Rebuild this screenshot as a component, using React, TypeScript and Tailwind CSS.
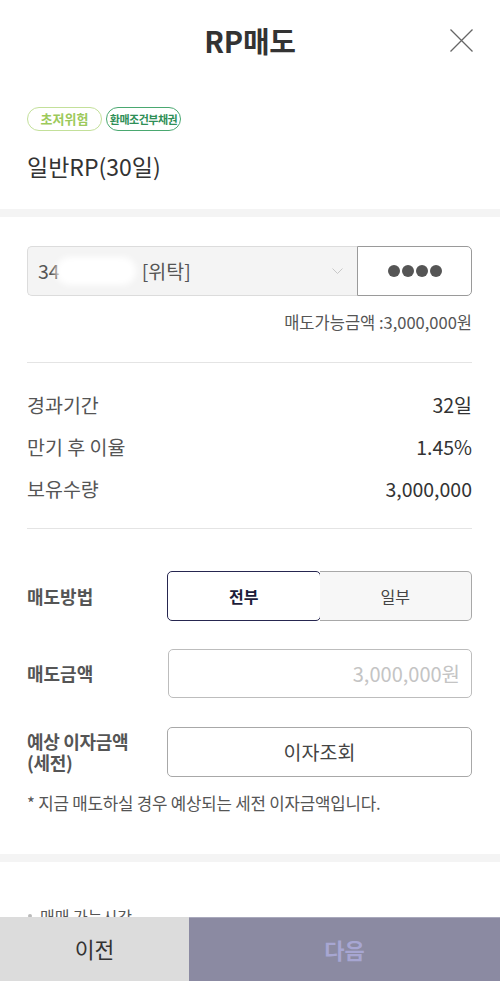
const font = { fontFamily: '"Noto Sans CJK KR", "Noto Sans", sans-serif' }

export default function App() {
  return (
    <div className="min-h-screen bg-white text-[#333] pb-[64px]" style={font}>
      {/* header */}
      <div className="relative h-[82px] flex items-center justify-center">
        <h1 className="text-[29px] font-bold text-[#333] tracking-[-0.3px]">RP매도</h1>
        <button className="absolute right-[27px] top-[29px]">
          <svg width="23" height="23" viewBox="0 0 23 23" fill="none">
            <path d="M0.5 0.5 L22.5 22.5 M22.5 0.5 L0.5 22.5" stroke="#666" strokeWidth="1.3" />
          </svg>
        </button>
      </div>

      <div className="pl-[27px] pr-[28px] pt-[25px] pb-[28px]">
        <div className="flex gap-[4px]">
          <span className="h-[24px] w-[75px] rounded-full border border-[#c3e09a] text-[#9cc95a] text-[13px] font-bold flex items-center justify-center">초저위험</span>
          <span className="h-[24px] w-[75px] rounded-full border-[1.5px] border-[#4aa870] text-[#2f8f57] text-[11px] font-bold flex items-center justify-center tracking-[-0.5px]">환매조건부채권</span>
        </div>
        <div className="mt-[20px] text-[23px] leading-[30px] text-[#333]">일반RP(30일)</div>
      </div>

      <div className="h-[8px] bg-[#f4f4f4]" />

      <div className="pl-[27px] pr-[28px] pt-[29px]">
        <div className="flex h-[50px]">
          <div className="flex-1 flex items-center bg-[#f4f4f4] border border-[#dcdcdc] border-r-0 rounded-l-[5px] pl-[10px] pr-[14px] text-[19.5px] text-[#555]">
            <span>34</span>
            <span className="w-[80px] h-[28px] bg-white rounded-full blur-[3px] -ml-[4px]" />
            <span className="ml-[6px]">[위탁]</span>
            <svg className="ml-auto" width="11" height="7" viewBox="0 0 11 7" fill="none">
              <path d="M0.5 0.5 L5.5 5.5 L10.5 0.5" stroke="#c8c8c8" strokeWidth="1" />
            </svg>
          </div>
          <button className="w-[115px] bg-white border border-[#9a9a9a] rounded-r-[5px] flex items-center justify-center gap-[2px]">
            <span className="w-[12px] h-[12px] rounded-full bg-[#555]" />
            <span className="w-[12px] h-[12px] rounded-full bg-[#555]" />
            <span className="w-[12px] h-[12px] rounded-full bg-[#555]" />
            <span className="w-[12px] h-[12px] rounded-full bg-[#555]" />
          </button>
        </div>
        <div className="mt-[15px] text-right text-[16.5px] leading-[22px] text-[#555]">매도가능금액 :3,000,000원</div>

        <div className="mt-[29px] h-px bg-[#e4e4e4]" />

        <div className="mt-[21px]">
          {[
            ['경과기간', '32일'],
            ['만기 후 이율', '1.45%'],
            ['보유수량', '3,000,000'],
          ].map(([k, v]) => (
            <div key={k} className="h-[42px] flex items-center justify-between text-[19.5px]">
              <span className="text-[#555]">{k}</span>
              <span className="text-[#333]">{v}</span>
            </div>
          ))}
        </div>

        <div className="mt-[18px] h-px bg-[#e4e4e4]" />

        <div className="mt-[42px] flex items-center">
          <div className="w-[140px] text-[18px] font-bold text-[#555]">매도방법</div>
          <div className="flex-1 flex h-[50px]">
            <button className="flex-1 bg-white border-[1.5px] border-[#262650] rounded-[5px] text-[16px] font-bold text-[#1c1c3a]">전부</button>
            <button className="flex-1 -ml-[1px] bg-[#f7f7f7] border border-[#a8a8a8] border-l-0 rounded-r-[5px] text-[16px] text-[#444]">일부</button>
          </div>
        </div>

        <div className="mt-[28px] flex items-center">
          <div className="w-[141px] text-[18px] font-bold text-[#555]">매도금액</div>
          <div className="flex-1 h-[49px] border border-[#bdbdbd] rounded-[5px] flex items-center justify-end pr-[11px] text-[20px] text-[#c4c4c4]">3,000,000원</div>
        </div>

        <div className="mt-[29px] flex items-center">
          <div className="w-[140px] text-[18px] font-bold text-[#555] leading-[21px] tracking-[-0.3px]">
            <div>예상 이자금액</div>
            <div>(세전)</div>
          </div>
          <button className="flex-1 h-[50px] border border-[#a8a8a8] rounded-[5px] bg-white text-[19.5px] text-[#444]">이자조회</button>
        </div>

        <div className="mt-[15px] text-[16.8px] leading-[22px] text-[#555] tracking-[-0.2px]">* 지금 매도하실 경우 예상되는 세전 이자금액입니다.</div>
      </div>

      <div className="mt-[40px] h-[8px] bg-[#f4f4f4]" />

      <div className="pl-[28px] pr-[28px] pt-[42px] pb-[20px]">
        <div className="flex items-center gap-[8px] text-[16px] text-[#555]">
          <span className="w-[4px] h-[4px] rounded-full bg-[#bbb]" />
          <span>매매 가능시간</span>
        </div>
      </div>

      {/* bottom buttons */}
      <div className="fixed left-0 right-0 bottom-0 h-[64px] flex">
        <button className="w-[189px] bg-[#dcdcdc] text-[21.5px] text-[#333]">이전</button>
        <button className="flex-1 bg-[#8b8aa2] border-t border-[#a9a9bc] text-[22px] font-bold text-[#a7a6d2]">다음</button>
      </div>
    </div>
  )
}
